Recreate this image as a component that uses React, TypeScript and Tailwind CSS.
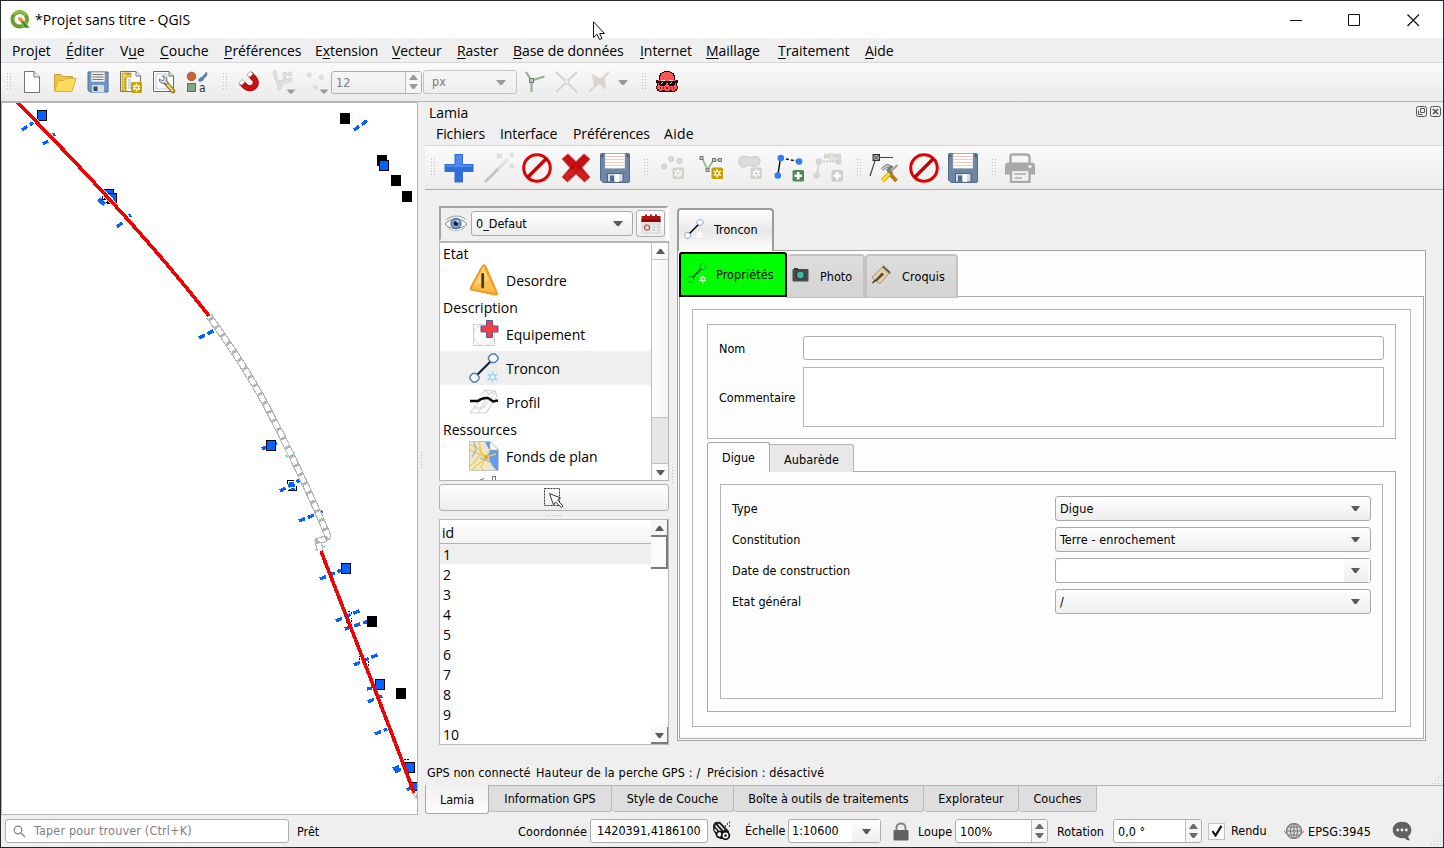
import type { ReactNode } from "react";

const SEGOE = "font-['Open_Sans','Noto_Sans',sans-serif]";
const TAHOMA = "font-['DejaVu_Sans_Condensed','DejaVu_Sans',sans-serif] [font-stretch:condensed]";

/* ---------- small building blocks ---------- */

function Grip({ className = "", rows = 6 }: { className?: string; rows?: number }) {
  return (
    <svg className={`shrink-0 ${className}`} width="5" height={rows * 3} shapeRendering="crispEdges">
      {Array.from({ length: rows }, (_, i) => (
        <g key={i} fill="#bdbdbd">
          <rect x="0" y={i * 3} width="1" height="1" />
          <rect x="3" y={i * 3} width="1" height="1" />
        </g>
      ))}
    </svg>
  );
}

function Tri({ up = false, color = "#5a5a5a", w = 9, h = 5 }: { up?: boolean; color?: string; w?: number; h?: number }) {
  return (
    <svg width={w} height={h} viewBox="0 0 10 6" preserveAspectRatio="none" className="shrink-0">
      <path d={up ? "M0 6L4 0H6L10 6Z" : "M0 0L4 6H6L10 0Z"} fill={color} />
    </svg>
  );
}

function Resize() {
  return (
    <svg width="11" height="11" shapeRendering="crispEdges" className="shrink-0" fill="#c4c4c4">
      {[[9, 0], [6, 3], [9, 3], [3, 6], [6, 6], [9, 6], [0, 9], [3, 9], [6, 9], [9, 9]].map(([x, y]) => (
        <rect key={`${x}-${y}`} x={x} y={y} width="1" height="1" />
      ))}
    </svg>
  );
}

/* ---------- icons ---------- */

function QgisLogo() {
  return (
    <svg width="20" height="20" viewBox="0 0 20 20">
      <circle cx="9.7" cy="9.3" r="7.3" fill="none" stroke="#6aa02f" strokeWidth="4" />
      <path d="M4 4.500A7.300 7.300 0 0 1 16 5.500" fill="none" stroke="#8dc04a" strokeWidth="2.500" />
      <path d="M10 11L14 10.500L20 18H14.500Z" fill="#4f8a25" stroke="#fff" strokeWidth=".5" />
      <path d="M8 7L12 7.500L13 11.500L11 12L8.500 10Z" fill="#ee7913" />
      <path d="M8 7L12 7.500L10.500 10Z" fill="#f8b24a" />
    </svg>
  );
}

function NewFile() {
  return (
    <svg width="18" height="24" viewBox="0 0 18 24">
      <path d="M1.500 1.500H11L16.500 7V22.500H1.500Z" fill="#fff" stroke="#747474" />
      <path d="M11 1.500V7H16.500" fill="#f2f2f2" stroke="#747474" />
    </svg>
  );
}

function OpenFolder() {
  return (
    <svg width="24" height="22" viewBox="0 0 24 22">
      <path d="M1.500 19V3.500H8L10 5.500H19.500V9" fill="#e9c34a" stroke="#c9a335" />
      <path d="M1.500 20.500L5 9.500H11L13 7.500H23L19 20.500Z" fill="#ffdb58" stroke="#d9b13c" />
    </svg>
  );
}

function Floppy() {
  return (
    <svg width="22" height="22" viewBox="0 0 22 22">
      <path d="M1 1H21V21H3L1 19Z" fill="#6d98c8" stroke="#4b6e98" />
      <rect x="4" y="1" width="14" height="10" fill="#f0f0f0" stroke="#7b8794" strokeWidth=".6" />
      <path d="M5.500 3.500H16.500M5.500 6H16.500M5.500 8.500H16.500" stroke="#777" />
      <rect x="5" y="14" width="12" height="7" fill="#d9dce0" />
      <rect x="6.500" y="15.500" width="4" height="4.500" fill="#2f4a78" />
    </svg>
  );
}

function Star({ x, y, s, fill }: { x: number; y: number; s: number; fill: string }) {
  const c = s / 2;
  const r = s * 0.36;
  const k = r * 0.86;
  const h = r * 0.5;
  return (
    <g transform={`translate(${x} ${y})`}>
      <rect width={s} height={s} rx="1.500" fill={fill} />
      <path
        d={`M${c} ${c - r}V${c + r}M${c - k} ${c - h}L${c + k} ${c + h}M${c - k} ${c + h}L${c + k} ${c - h}`}
        stroke="#fff"
        strokeWidth={s * 0.13}
      />
      <circle cx={c} cy={c} r={s * 0.17} fill={fill} stroke="#fff" strokeWidth="1.100" />
    </g>
  );
}

function LayoutNew() {
  return (
    <svg width="24" height="24" viewBox="0 0 24 24">
      <path d="M1.500 1.500H17L21.500 6V21.500H1.500Z" fill="#fff" stroke="#747474" />
      <path d="M17 1.500V6H21.500" fill="#eee" stroke="#747474" />
      <path d="M3 3H12V7H7V21H3Z" fill="#f2d04a" stroke="#b89314" strokeWidth=".8" />
      <path d="M5 9H7M5 12H7M5 15H7M5 18H7M8 3V5M10 3V5" stroke="#7c6410" strokeWidth=".8" />
      <path d="M9 9V19H12V9Z" fill="#cfd9e8" />
      <Star x={12} y={12} s={11} fill="#c9a000" />
    </svg>
  );
}

function LayoutManager() {
  return (
    <svg width="24" height="24" viewBox="0 0 24 24">
      <path d="M1.500 1.500H17L21.500 6V21.500H1.500Z" fill="#fff" stroke="#666" />
      <path d="M17 1.500V6H21.500" fill="#eee" stroke="#666" />
      <path d="M4 4H15V19H4Z" fill="#fbfcff" stroke="#a9bbe0" strokeWidth=".8" />
      <path d="M14 13L21 21" stroke="#8c7320" strokeWidth="4.500" strokeLinecap="round" />
      <path d="M15 14L20.500 20.500" stroke="#f0cf60" strokeWidth="2.500" strokeLinecap="round" />
      <path d="M7.500 9C7 12 10 14.500 12.500 13L14.500 14.500L16 12.500L14.500 11C15.500 7.500 12.500 5.500 10.500 6L12.500 8.500L10.500 11Z" fill="#dadada" stroke="#555" strokeWidth=".8" />
    </svg>
  );
}

function StyleManager() {
  return (
    <svg width="22" height="22" viewBox="0 0 22 22">
      <circle cx="5.500" cy="5.500" r="4.300" fill="#cc6438" stroke="#9e4a26" strokeWidth=".8" />
      <path d="M13 10C12 8 15 6 16 6.500L20.500 1L21 4L17.500 8C17 10 15 10.500 13 10Z" fill="#5a83ad" stroke="#3f6288" strokeWidth=".6" />
      <rect x="1.500" y="12.500" width="8" height="8" fill="#82a783" stroke="#4a7a4f" />
      <text x="13" y="20.500" fontSize="12" fill="#333" fontFamily="DejaVu Sans">a</text>
    </svg>
  );
}

function Magnet() {
  return (
    <svg width="22" height="22" viewBox="0 0 22 22">
      <path d="M3.500 11.500C8 16.500 10 18 13.500 17C18.500 15.500 18.500 10.500 16.500 8L11.500 2.500" fill="none" stroke="#8f0000" strokeWidth="6" />
      <path d="M3.500 11.500C8 16.500 10 18 13.500 17C18.500 15.500 18.500 10.500 16.500 8L11.500 2.500" fill="none" stroke="#cf0d0d" strokeWidth="4.800" />
      <path d="M.8 11.600L4.500 8.200L7 10.900L3.300 14.300ZM8.800 3.600L12.500.3L15 3L11.300 6.300Z" fill="#fff" stroke="#999" strokeWidth=".7" />
    </svg>
  );
}

function SnapV() {
  return (
    <svg width="24" height="24" viewBox="0 0 24 24">
      <path d="M2 3L7 18L13 6M7 18L19 10M13 4H20M12 9.500H19" stroke="#dcdcdc" strokeWidth="1.500" fill="none" />
      {[[2.500, 2.500], [3.500, 7], [6, 12], [7, 18], [9, 12], [12.500, 9.500], [12.500, 4], [18, 3.500], [18, 9.500]].map(([x, y]) => (
        <rect key={`${x}${y}`} x={x - 1.500} y={y - 1.500} width="3.500" height="3.500" rx="1" fill="#e3e3e3" stroke="#cfcfcf" strokeWidth=".9" />
      ))}
      <path d="M14.500 19.500H23.500L20 23.500H18Z" fill="#9b9b9b" />
    </svg>
  );
}

function SnapDots() {
  return (
    <svg width="24" height="24" viewBox="0 0 24 24">
      {[[3, 4.500], [15, 7], [9, 17.500]].map(([x, y]) => (
        <rect key={x} x={x - 1.500} y={y - 1.500} width="3.500" height="3.500" rx="1" fill="#e3e3e3" stroke="#cfcfcf" strokeWidth=".9" />
      ))}
      <path d="M13.500 19.500H22.500L19 23.500H17Z" fill="#9b9b9b" />
    </svg>
  );
}

function TopoEdit() {
  return (
    <svg width="22" height="22" viewBox="0 0 22 22" fill="none">
      <path d="M2 1L7.500 9.500L20.500 5.500M7.500 10V21" stroke="#86bd86" strokeWidth="2.200" />
      <rect x="5.500" y="7.500" width="4" height="4" fill="#c4c4c4" stroke="#777" />
    </svg>
  );
}

function SnapCross() {
  return (
    <svg width="24" height="22" viewBox="0 0 24 22" fill="none" stroke="#d3d3d3">
      <path d="M1 1L22 21M22 1L1 21" strokeWidth="2" />
      <rect x="9.500" y="9" width="4" height="4" fill="#eee" />
    </svg>
  );
}

function SelfSnap() {
  return (
    <svg width="24" height="22" viewBox="0 0 24 22" fill="none">
      <path d="M1 21L21 1" stroke="#d6d6d6" strokeWidth="2" />
      <path d="M4 3L12 7.500L17 5L18 19L11 13L6 15Z" fill="#d9d5ca" />
    </svg>
  );
}

function Octopus() {
  return (
    <svg width="22" height="22" viewBox="0 0 22 22" shapeRendering="crispEdges">
      <path d="M8 0H14V1H16V2H18V4H19V9H22V12H21V15H22V18H21V20H19V21H3V20H1V18H0V15H1V12H0V9H3V4H4V2H6V1H8Z" fill="#2a0d0d" />
      <path d="M8 1H14V2H16V3H17V5H18V9H20V15H21V18H19V20H16V19H13V20H9V19H6V20H3V18H1V15H2V9H4V5H5V3H6V2H8Z" fill="#fa5553" />
      <path d="M5 9H9V10H13V9H17V10H5Z" fill="#ffe3e3" />
      <path d="M0 10H22V12H19V14H18V15H13V14H12V12H10V14H9V15H4V14H3V12H0Z" fill="#101010" />
      <path d="M4 16H5V18H4ZM7 16H8V18H7ZM10 16H12V18H10ZM14 16H15V18H14ZM17 16H18V18H17Z" fill="#8c1a1a" />
      <path d="M5 12H6V13H5ZM6 11H7V12H6ZM14 12H15V13H14ZM15 11H16V12H15Z" fill="#ddd" />
    </svg>
  );
}

function PlusBlue() {
  return (
    <svg width="30" height="30" viewBox="0 0 30 30">
      <path d="M10.500 1H19V11H29.500V19H19V29.500H10.500V19H.5V11H10.500Z" fill="#2f6fdc" />
      <path d="M11.500 2H18V12H28V14H2V12H11.500Z" fill="#4f8aea" />
    </svg>
  );
}

function Wand() {
  return (
    <svg width="32" height="32" viewBox="0 0 32 32" fill="none">
      <path d="M2 30L20 12" stroke="#c4c4c4" strokeWidth="3" />
      <path d="M15 17L25 7" stroke="#e0e0e0" strokeWidth="3" />
      <path d="M14 1.500L19 6.500M19 1.500L14 6.500M27 1L30.500 4.500M30.500 1L27 4.500M26.500 12L30.500 16M30.500 12L26.500 16" stroke="#dddbd3" strokeWidth="2" />
    </svg>
  );
}

function Forbid() {
  return (
    <svg width="30" height="30" viewBox="0 0 30 30" fill="none">
      <circle cx="15" cy="15" r="13.300" stroke="#da0606" strokeWidth="3" />
      <path d="M5.500 24.500L24.500 5.500" stroke="#c00404" strokeWidth="3.400" />
    </svg>
  );
}

function RedX() {
  return (
    <svg width="30" height="30" viewBox="0 0 30 30">
      <path d="M1 6L7 .8L15 8.500L23 .8L29 6L21 14.800L29 24L23.500 29L15 21L6.500 29L1 24L9 14.800Z" fill="#c51313" stroke="#ce5252" strokeWidth=".8" />
      <path d="M9 14.800L15 12L21 14.800L15 20Z" fill="#a30505" />
      <path d="M2.500 23L15 12L27 24L23.500 27.500L15 19.500L6.500 27.500Z" fill="#de2a2a" opacity=".5" />
    </svg>
  );
}

function BigFloppy() {
  return (
    <svg width="30" height="30" viewBox="0 0 30 30">
      <path d="M.5 1.500Q.5 .5 1.500 .5H28.500Q29.500 .5 29.500 1.500V28.500Q29.500 29.500 28.500 29.500H3L.5 27Z" fill="#6c87a6" stroke="#526b88" />
      <rect x="5" y=".5" width="20" height="15" fill="#fff" stroke="#a7a9ab" strokeWidth=".6" />
      <path d="M5.500 3.500H24.500M5.500 6.500H24.500M5.500 9.500H24.500M5.500 12.500H24.500" stroke="#f1c9bb" />
      <path d="M7.500 29V20.500H23V29Z" fill="#d5dbe3" stroke="#4c637d" />
      <path d="M15 21H19V29H15Z" fill="#fff" />
      <rect x="10" y="22.500" width="4" height="6" fill="#4f6b8a" />
      <path d="M1.500 3H3M27 3H28.500" stroke="#24384f" strokeWidth="1.500" />
    </svg>
  );
}

function PointsNew() {
  return (
    <svg width="26" height="26" viewBox="0 0 26 26">
      <g fill="#dcdcdc" stroke="#c9c9c9">
        <circle cx="12" cy="4" r="2.500" />
        <circle cx="20.500" cy="6" r="2.500" />
        <circle cx="5" cy="11.500" r="2.500" />
      </g>
      <Star x={13.500} y={12.500} s={11.500} fill="#d3d1c9" />
    </svg>
  );
}

function LineNew() {
  return (
    <svg width="26" height="26" viewBox="0 0 26 26">
      <path d="M4 3L9.500 14.500L15.500 5H22" fill="none" stroke="#7fbf84" strokeWidth="1.600" />
      <g fill="#c9c9c9" stroke="#777">
        <rect x="2" y="1.500" width="3" height="3" />
        <rect x="8" y="13.500" width="3" height="3" />
        <rect x="14.500" y="3.500" width="3" height="3" />
        <rect x="20.500" y="3.500" width="3" height="3" />
      </g>
      <Star x={13.500} y={12.500} s={11.500} fill="#c9a000" />
    </svg>
  );
}

function PolyNew() {
  return (
    <svg width="26" height="26" viewBox="0 0 26 26">
      <path d="M2 6C2 0 7 1 11 2C15 3 22 -1 23 5C23.500 9 21 12 16 11C12 10 11 10 8 12C4 13 2 10 2 6Z" fill="#dcdcdc" stroke="#c9c9c9" />
      <Star x={13.500} y={12.500} s={11.500} fill="#d3d1c9" />
    </svg>
  );
}

function PlusBadge({ fill }: { fill: string }) {
  return (
    <g>
      <rect x="18.500" y="17" width="11.500" height="11.500" rx="1.500" fill={fill} />
      <path d="M24.200 19V26.500M20.500 22.700H28" stroke="#fff" strokeWidth="2.600" />
    </g>
  );
}

function LineAdd() {
  return (
    <svg width="31" height="30" viewBox="0 0 31 30">
      <path d="M3.800 22.500L6.500 5" stroke="#111" strokeWidth="1.500" />
      <path d="M7 5L25 8.500" stroke="#111" strokeWidth="1.500" strokeDasharray="3 2" />
      <g fill="#2a80f5">
        <circle cx="3.800" cy="22.500" r="3.300" />
        <circle cx="6.800" cy="5" r="3.300" />
        <circle cx="25" cy="8.500" r="3.300" />
      </g>
      <PlusBadge fill="#4f8b50" />
    </svg>
  );
}

function LineAddDisabled() {
  return (
    <svg width="31" height="30" viewBox="0 0 31 30">
      <path d="M3.800 22.500L6 8" stroke="#d0d0d0" strokeWidth="1.500" />
      <path d="M7 8.500H25.500" stroke="#c4c4c4" strokeWidth="1.500" strokeDasharray="2 1" />
      <g fill="#d0d5dd">
        <circle cx="3.800" cy="22.500" r="3.300" />
        <circle cx="6" cy="8.500" r="3.300" />
        <circle cx="25.500" cy="8.500" r="3.300" />
      </g>
      <path d="M11 .8H28V5.500H11Z" fill="#dad6cc" />
      <path d="M17 -1H21V8H17Z" fill="#e4e4e4" stroke="#ccc" strokeWidth=".6" />
      <PlusBadge fill="#cecece" />
    </svg>
  );
}

function EditTools() {
  return (
    <svg width="30" height="30" viewBox="0 0 30 30" fill="none">
      <path d="M1 23L7 4.500H24" stroke="#444" strokeWidth="1.200" />
      <rect x="4" y="1.500" width="6.500" height="6" fill="#aaa" stroke="#333" />
      <path d="M4 1.500L10.500 7.500M10.500 1.500L4 7.500" stroke="#333" strokeWidth=".8" />
      <path d="M28.500 12L20 20" stroke="#999" strokeWidth="1.800" />
      <path d="M21 21L27.500 28" stroke="#b87a10" strokeWidth="4" />
      <path d="M13.500 28L22.500 18" stroke="#d8a900" strokeWidth="4.500" />
      <path d="M13.500 28L21.500 19" stroke="#ffe23c" strokeWidth="2.500" />
      <path d="M13 16.500L18 12.500L22 14L19 17L23 21" stroke="#777" strokeWidth="3" />
      <path d="M13 16.500L18 12.500L20.500 13.500" stroke="#ddd" strokeWidth="1.300" />
    </svg>
  );
}

function Printer() {
  return (
    <svg width="30" height="30" viewBox="0 0 30 30">
      <path d="M5.500 12V3Q5.500 1.500 7 1.500H21Q24.500 1.500 24.500 4.500V12" fill="#f6f6f6" stroke="#a9a9a9" strokeWidth="2.400" />
      <path d="M0 13Q0 9.500 3 9.500H27Q30 9.500 30 13V21.500H0Z" fill="#a9a9a9" />
      <circle cx="25" cy="13.500" r="1.600" fill="#f3f3f3" />
      <rect x="6" y="17" width="18.500" height="12" fill="#f1f1f1" stroke="#a9a9a9" strokeWidth="2.400" />
      <path d="M9.500 21H21M9.500 25H17" stroke="#a9a9a9" strokeWidth="1.700" />
    </svg>
  );
}

function Eye() {
  return (
    <svg width="24" height="17" viewBox="0 0 24 17">
      <path d="M1 9C6 3 17 2 23 9C17 15 6 15 1 9Z" fill="#fff" stroke="#666" strokeWidth=".8" />
      <path d="M2 5C8 -.5 17 0 22 4.500" fill="none" stroke="#8a8a8a" strokeWidth=".8" />
      <path d="M3 12C8 17 16 17 21 12" fill="none" stroke="#aaa" strokeWidth=".7" />
      <circle cx="12" cy="8.500" r="5.200" fill="#6f9fd8" stroke="#35547c" strokeWidth=".8" />
      <circle cx="12" cy="8.500" r="2.300" fill="#122" />
      <circle cx="13.500" cy="6.500" r="1" fill="#fff" />
    </svg>
  );
}

function CalendarRed() {
  return (
    <svg width="20" height="20" viewBox="0 0 20 20">
      <rect x="1" y="7" width="18" height="12" fill="#f2f2f2" stroke="#c5c5c5" strokeWidth=".6" />
      <path d="M1 10H19M1 13H19M1 16H19M5 7V19M9 7V19M13 7V19M17 7V19" stroke="#bccac6" strokeWidth=".7" />
      <path d="M.5 2H4V.5H6V2H9V.5H11V2H14V.5H16V2H19.500V8H.5Z" fill="#b01010" />
      <path d="M.5 5.500H19.500V8H.5Z" fill="#8d0808" />
      <circle cx="6" cy="13.500" r="2.500" fill="none" stroke="#d24545" strokeWidth="1.200" />
    </svg>
  );
}

function Warning() {
  return (
    <svg width="30" height="32" viewBox="0 0 30 32">
      <path d="M14.500 .8Q16 .3 17 2.500L28.500 29Q28.500 31.500 27 31.200L2 26Q.5 25 1.500 23L13 2Q13.700 1 14.500 .8Z" fill="#f6a623" stroke="#dd8715" strokeWidth=".8" />
      <path d="M14.500 2.500L26.500 28.500L3 24.500Z" fill="#fcbf4c" />
      <path d="M14.500 3L20 16Q12 20 5 21Z" fill="#ffdc94" opacity=".7" />
      <path d="M13.700 10.500V23" stroke="#4c3b1c" strokeWidth="2.800" strokeLinecap="round" />
    </svg>
  );
}

function Equip() {
  return (
    <svg width="30" height="30" viewBox="0 0 30 30">
      <rect x="4.500" y="5.500" width="21" height="21" fill="#fff" stroke="#cfcfcf" />
      <circle cx="15" cy="16" r="10.500" fill="none" stroke="#d9d9d9" />
      <path d="M17.500 1.500H23.500V7H29V13H23.500V18.500H17.500V13H12V7H17.500Z" fill="#f93c3c" stroke="#54589c" />
    </svg>
  );
}

function Segment({ size = 30, star = "#a8d3f5", line = "#0d2238", node = "#4a7fb5", fill = "#fff" }: { size?: number; star?: string; line?: string; node?: string; fill?: string }) {
  return (
    <svg width={size} height={size} viewBox="0 0 30 30" fill="none">
      <path d="M8 22L22 8" stroke={line} strokeWidth="2.200" />
      <path d="M3.500 20.500H7L10 23.500V26L7 29H4L1 26V23.500Z" fill={fill} stroke={node} strokeWidth="1.400" />
      <path d="M22.500 1H26L29 4V6.500L26 9.500H22.500L19.500 6.500V4Z" fill={fill} stroke={node} strokeWidth="1.400" />
      <path d="M23.500 18.500V29.500M18.500 21L28.500 27M28.500 21L18.500 27" stroke={star} strokeWidth="1.800" />
      <circle cx="23.500" cy="24" r="2.600" fill={fill} stroke={star} strokeWidth="1.500" />
    </svg>
  );
}

function Profile() {
  return (
    <svg width="30" height="26" viewBox="0 0 30 26" fill="none">
      <path d="M1 24H17L28 7L26 2L16 1L12 6M1 24L11 11M9 24L20 5L26 2M17 24L22 17M5 19H14L26 4M20 5L16 1" stroke="#d2d2d2" strokeWidth="1.100" />
      <path d="M1 12H9C12 9 18 8.500 20 9.500L24 12.500L29 11.500" stroke="#0a0a0a" strokeWidth="2.500" />
    </svg>
  );
}

function MapSheet() {
  return (
    <svg width="30" height="30" viewBox="0 0 30 30">
      <path d="M.5 .5H21L29.500 9V29.500H.5Z" fill="#ece6cf" stroke="#b9b9b9" strokeWidth=".8" />
      <path d="M16 1H21L29 9V29H27L22 23L19 14L21 10Z" fill="#5c9cf2" />
      <path d="M1 21L8 18L14 22L19 29H1Z" fill="#e6ecc6" />
      <path d="M10 1L13 10L16 16H12Z" fill="#c7dfa2" />
      <path d="M1 9L10 13L17 16L27 13M10 1L12 12L5 22L1 25M17 16L12 26L14 29M1 4L8 6L17 16L22 7M3 29L17 16L23 24" fill="none" stroke="#f7ca55" strokeWidth="1.400" />
      <path d="M5 1L7 9L3 16M11 17L22 21" fill="none" stroke="#7fb3e8" strokeWidth="1.200" />
      <circle cx="17" cy="16" r="2" fill="#f19a2a" />
      <path d="M21 .5V9H29.500Z" fill="#fff" stroke="#b3b3b3" strokeWidth=".7" />
    </svg>
  );
}

function SelectArrow() {
  return (
    <svg width="22" height="22" viewBox="0 0 22 22" fill="none">
      <path d="M1.500 1.500H16.500V18.500H1.500Z" stroke="#333" strokeDasharray="2 1" />
      <path d="M6.500 6.500L17.500 11L14.500 13L20 19L18.500 20.500L12.500 15L10.500 18Z" fill="#fff" stroke="#333" />
    </svg>
  );
}

function Camera() {
  return (
    <svg width="17" height="14" viewBox="0 0 17 14">
      <rect x=".5" y="1" width="16" height="12.500" rx="1" fill="#4b4b4b" />
      <rect x="2" y="0" width="4" height="2" fill="#3a3a3a" />
      <circle cx="8.500" cy="7" r="4.700" fill="#1d3b3b" />
      <circle cx="8.500" cy="7" r="3.400" fill="#3fb5a4" />
    </svg>
  );
}

function Sketch() {
  return (
    <svg width="20" height="20" viewBox="0 0 20 20">
      <path d="M1 12L12 1.500L19 7.500L9 18.500Q4 17 1 12Z" fill="#e2cfa8" stroke="#8d7b5a" strokeWidth=".7" />
      <path d="M12 1.500L19 8" stroke="#55483a" strokeWidth="2.400" strokeDasharray="1.500 .7" />
      <path d="M3.500 15.500L11 7.500L13 9.500L5.500 16.500Z" fill="#50483c" />
      <path d="M1.500 18L4.500 15" stroke="#222" strokeWidth="1.300" />
    </svg>
  );
}

function Binoculars() {
  return (
    <svg width="20" height="20" viewBox="0 0 20 20">
      <path d="M1 4L3 1L8 .8L17 10L15 18L8 18L4 14L1 9Z" fill="#222" />
      <path d="M3.500 4.500L9 11M6.500 3L12 9M2.500 8L5 11" stroke="#fff" strokeWidth="1.200" />
      <circle cx="7.500" cy="13.500" r="3" fill="#fff" stroke="#111" strokeWidth="1.700" />
      <circle cx="13.500" cy="14.500" r="3.800" fill="#fff" stroke="#111" strokeWidth="1.800" />
      <circle cx="13.500" cy="14.500" r="1.300" fill="#111" />
      <path d="M13 5H14M15 3H16M17 1.500H18M17 5H18" stroke="#111" strokeWidth="1.300" />
    </svg>
  );
}

function Lock() {
  return (
    <svg width="16" height="19" viewBox="0 0 16 19">
      <path d="M3.500 9V5.500Q4 1.500 8 1.500T12.500 5.500V9" fill="none" stroke="#858585" strokeWidth="2" />
      <rect x=".5" y="8" width="15" height="10.500" rx="1" fill="#626262" />
    </svg>
  );
}

function Globe() {
  return (
    <svg width="20" height="18" viewBox="0 0 20 18" fill="none">
      <path d="M1 10.500Q10 15 19 10.500M1 8.500Q0 9.500 1 10.500M19 8.500Q20 9.500 19 10.500" stroke="#777" />
      <circle cx="10" cy="9" r="7.500" fill="#dcdcdc" stroke="#6f6f6f" strokeWidth="1.200" />
      <ellipse cx="10" cy="9" rx="3.500" ry="7.500" stroke="#777" />
      <path d="M10 1.500V16.500M2.500 9H17.500M4 5H16M4 13H16" stroke="#777" />
    </svg>
  );
}

function Speech() {
  return (
    <svg width="20" height="20" viewBox="0 0 20 20" className="shrink-0">
      <path d="M10 .8C15.500 .8 19.300 4 19.300 9C19.300 12 18 14 16 15.500L18 19.500C15 19.500 13.500 18 12.500 17C6 18 .8 14.500 .8 9C.8 4 4.500 .8 10 .8Z" fill="#616161" />
      <g fill="#eee">
        <circle cx="5.700" cy="9" r="1.400" />
        <circle cx="10" cy="9" r="1.400" />
        <circle cx="14.300" cy="9" r="1.400" />
      </g>
    </svg>
  );
}

/* ---------- map ---------- */

const RED_NORTH = "M16 101C80 166 150 240 209 316";
const RED_SOUTH = "M321 551C340 601 380 700 414 793";
const TRACK = "M209 316C235 352 252 378 268 409C288 447 309 491 328 536Q327 539 318 541L320 550";
const BLUE = "#0562ff";
const SQUARES: [number, number, string][] = [
  [345, 118, "#000"], [382, 160, "#000"], [396, 180, "#000"], [407, 196, "#000"], [372, 621, "#000"], [401, 693, "#000"],
  [42, 115, BLUE], [384, 165, BLUE], [271, 445, BLUE], [346, 568, BLUE], [380, 684, BLUE],
  [410, 767, BLUE], [109, 194, BLUE], [112, 198, BLUE],
];
const SPURS: [number, number, number, number][] = [
  [22, 130, 34, 122], [43, 144, 48, 141], [53, 135, 55, 134], [354, 130, 368, 120], [117, 227, 123, 222], [129, 216, 131, 215],
  [199, 338, 215, 330], [262, 449, 278, 442], [280, 491, 300, 480], [299, 521, 324, 511], [320, 579, 344, 569],
  [336, 621, 361, 610], [345, 629, 369, 621], [354, 665, 379, 654], [367, 689, 372, 688], [368, 702, 382, 696],
  [375, 734, 387, 729], [393, 769, 401, 766], [395, 772, 402, 769], [407, 790, 413, 786],
];

function MapCanvas() {
  return (
    <svg className="block" width="415" height="711" viewBox="2 103 415 711" shapeRendering="crispEdges">
      <rect x="2" y="103" width="415" height="711" fill="#fff" />
      {SPURS.map(([a, b, c, d]) => (
        <path key={`${a}-${b}`} d={`M${a} ${b}L${c} ${d}`} stroke={BLUE} strokeWidth="3.400" strokeDasharray="6.500 3" />
      ))}
      {SQUARES.map(([x, y, c]) => (
        <rect key={`${x}-${y}`} x={x - 4.500} y={y - 4.500} width="9" height="9.500" fill={c} stroke="#000" />
      ))}
      <path d="M285 455H287M291 452H295M286 456H289M315 549H318M322 546H325" stroke="#3fdada" />
      <path d="M287.500 484V480.500H293.500M296.500 486V490.500H288" stroke="#000" fill="none" />
      <path d="M289 482H292V484H295V487H290V485H289ZM291 488H295V490H289V489H291Z" fill={BLUE} />
      <path d="M348 611.500H351V615M346 622.500H351V618M359.500 660V656.500H361M368.500 661V665.500H364M404 759.500H409" stroke="#000" fill="none" strokeDasharray="2 1" />
      <path d="M97 200L100 197L103 200L106 203L103 206L99 203Z" fill={BLUE} stroke="#fff" strokeWidth=".5" />
      <path d="M102.500 196V199.500H106M106 202.500H109" stroke="#000" fill="none" />
      <path d="M411.500 782.500H418V790H413Z" fill={BLUE} stroke="#000" />
      <path d={RED_NORTH} fill="none" stroke="#fff" strokeWidth="5.500" />
      <path d={RED_NORTH} fill="none" stroke="#f50000" strokeWidth="3.600" />
      <path d={RED_SOUTH} fill="none" stroke="#f50000" strokeWidth="3.600" />
      <path d={TRACK} fill="none" stroke="#b4b4b4" strokeWidth="7" strokeLinejoin="round" />
      <path d={TRACK} fill="none" stroke="#fff" strokeWidth="4.600" strokeLinejoin="round" />
      <path d={TRACK} fill="none" stroke="#b4b4b4" strokeWidth="4.600" strokeDasharray="2.800 7.200" strokeDashoffset="-2" />
      <path d="M412 793L416 797L414 799M416 794V799" stroke="#b4b4b4" fill="none" />
    </svg>
  );
}

/* ---------- widgets ---------- */

function Spin({ text, className, boxClass, arrow = "#6b6b6b" }: { text: string; className: string; boxClass: string; arrow?: string }) {
  return (
    <div className={`flex overflow-hidden rounded-[3px] border border-[#adadad] ${className}`}>
      <div className={`flex-1 pl-1 ${boxClass}`}>{text}</div>
      <div className="flex w-4 flex-col items-center justify-center gap-[4px] border-l border-[#bdbdbd] bg-[#f6f6f6]">
        <Tri up color={arrow} w={9} />
        <Tri color={arrow} w={9} />
      </div>
    </div>
  );
}

function Combo({ text = "", editable = false }: { text?: string; editable?: boolean }) {
  return (
    <div className={`flex h-[25px] w-[316px] items-center justify-between rounded-[3px] border border-[#a9a9a9] pl-1 ${editable ? "bg-white" : "bg-linear-to-b from-[#fefefe] to-[#eeeeee]"}`}>
      <span className="leading-[23px] tracking-[0.1px]">{text}</span>
      <span className={`flex h-full w-[26px] items-center justify-center pb-px pr-[3px] ${editable ? "border-r-2 border-white bg-linear-to-b from-[#fdfdfd] to-[#eeeeee] pr-px" : ""}`}>
        <Tri w={9} h={5} />
      </span>
    </div>
  );
}

const MENUS: [string, string, string, string][] = [
  ["Pro", "j", "et", "w-[54px]"], ["", "É", "diter", "w-[54px]"], ["V", "u", "e", "w-[40px]"], ["", "C", "ouche", "w-[64px]"],
  ["", "P", "références", "w-[91px]"], ["E", "x", "tension", "w-[77px]"], ["", "V", "ecteur", "w-[65px]"], ["", "R", "aster", "w-[56px]"],
  ["", "B", "ase de données", "w-[127px]"], ["", "I", "nternet", "w-[66px]"], ["", "M", "aillage", "w-[72px]"],
  ["", "T", "raitement", "w-[87px]"], ["", "A", "ide", "w-[50px]"],
];

function TreeHead({ children }: { children: ReactNode }) {
  return <div className="h-5 pl-[3px] leading-[21px]">{children}</div>;
}

function TreeItem({ icon, children, selected = false }: { icon: ReactNode; children: ReactNode; selected?: boolean }) {
  return (
    <div className={`flex h-[34px] items-center pl-[29px] ${selected ? "bg-[#efefef]" : ""}`}>
      <span className="flex w-[37px] shrink-0 items-center">{icon}</span>
      <span className="pt-px whitespace-nowrap">{children}</span>
    </div>
  );
}

function LeftColumn() {
  return (
    <div className="flex w-[230px] shrink-0 flex-col pt-[16px]">
      <div className={`flex h-[35px] items-start border-2 border-r-[3px] border-[#a3a3a3] border-r-white border-b-transparent pl-[3px] pt-[3px] ${TAHOMA} text-[12.500px]`}>
        <span className="mr-[3px] w-[24px] shrink-0 pt-1"><Eye /></span>
        <div className="flex h-[25px] w-[162px] shrink-0 items-center justify-between rounded-[3px] border border-[#a9a9a9] bg-linear-to-b from-[#fefefe] to-[#eee] pl-1 pr-[9px]">
          <span className="leading-[23px]">0_Defaut</span>
          <Tri w={10} h={5} />
        </div>
        <div className="-mt-px ml-[3px] flex h-[27px] w-[29px] shrink-0 items-center justify-center rounded-[3px] border border-[#b0b0b0] bg-linear-to-b from-white to-[#eee]">
          <CalendarRed />
        </div>
      </div>

      <div className={`flex h-[240px] border border-t-2 border-[#b4b4b4] bg-white ${SEGOE} text-[14px]`}>
        <div className="flex-1 overflow-hidden">
          <TreeHead>Etat</TreeHead>
          <TreeItem icon={<Warning />}>Desordre</TreeItem>
          <TreeHead>Description</TreeHead>
          <TreeItem icon={<Equip />}>Equipement</TreeItem>
          <TreeItem icon={<Segment />} selected>Troncon</TreeItem>
          <TreeItem icon={<Profile />}>Profil</TreeItem>
          <TreeHead>Ressources</TreeHead>
          <TreeItem icon={<MapSheet />}>Fonds de plan</TreeItem>
          <div className="pt-[3px] pl-[38px]">
            <svg width="20" height="4" fill="none" stroke="#777"><path d="M2 4L6 2.500M14.500 0V4M17.500 0V4M14.500 .5H17.500" /></svg>
          </div>
        </div>
        <div className="flex w-[17px] flex-col border-l border-[#c0c0c0] bg-[#e6e6e6]">
          <div className="flex h-[17px] items-center justify-center border-b border-[#c0c0c0] bg-[#fbfbfb]"><Tri up w={9} /></div>
          <div className="h-[158px] border-b border-[#c0c0c0] bg-linear-to-r from-white to-[#f4f4f4]" />
          <div className="flex-1" />
          <div className="flex h-[17px] items-center justify-center border-t border-[#c0c0c0] bg-[#fbfbfb]"><Tri w={9} /></div>
        </div>
      </div>

      <div className="mt-[3px] flex h-[27px] items-center justify-center rounded-[3px] border border-[#b0b0b0] bg-linear-to-b from-[#fefefe] to-[#ededed]">
        <SelectArrow />
      </div>
      <div className="flex h-[8px] items-center justify-center">
        <svg width="17" height="1" fill="#b8b8b8">{[0, 3, 6, 9, 12, 15].map((x) => <rect key={x} x={x} width="1" height="1" />)}</svg>
      </div>

      <div className={`flex h-[226px] border border-[#b8b8b8] bg-white ${SEGOE} text-[14px]`}>
        <div className="flex-1">
          <div className="h-6 border-b border-[#b4b4b4] bg-linear-to-b from-white to-[#f2f2f2] pl-[2px] leading-[25px]">id</div>
          {[1, 2, 3, 4, 5, 6, 7, 8, 9, 10].map((n) => (
            <div key={n} className={`h-5 pl-[3px] leading-[21px] ${n === 1 ? "bg-[#efefef]" : ""}`}>{n}</div>
          ))}
        </div>
        <div className="flex w-[17px] flex-col justify-between">
          <div>
            <div className="flex h-[17px] items-center justify-center border-r border-b-2 border-[#7a7a7a] bg-[#f6f6f6] pt-[2px]"><Tri up w={9} /></div>
            <div className="h-8 border-r-2 border-b-2 border-[#7a7a7a] bg-[#fbfbfb]" />
          </div>
          <div className="flex h-[17px] items-center justify-center border-r border-b-2 border-[#7a7a7a] bg-[#f9f9f9] pt-px"><Tri w={9} /></div>
        </div>
      </div>
    </div>
  );
}

function FormArea() {
  return (
    <div className={`flex w-[750px] shrink-0 flex-col pt-[18px] ${TAHOMA} text-[12.500px]`}>
      <div className="z-10 flex h-[43px] w-[97px] items-center rounded-t-[4px] border-2 border-b-0 border-[#9c9c9c] bg-linear-to-b from-white via-[#e8e8e8] to-[#fdfdfd] pl-[5px]">
        <span className="-mt-[4px]"><Segment size={20} line="#000" star="#fff" node="#7c9ccb" /></span>
        <span className="ml-[10px]">Troncon</span>
      </div>
      <div className="-mt-px h-[491px] w-[749px] border border-[#a3a3a3] bg-[#fdfdfd] px-px pb-px">
        <div className="flex h-[46px] items-start pt-px">
          <div className="z-10 flex h-[45px] w-[108px] items-center rounded-t-[3px] border-2 border-black bg-[#00ff00] pl-[6px]">
            <span className="-mt-[3px]"><Segment size={20} line="#031" star="#fff" node="#0a8f4a" fill="#0f0" /></span>
            <span className="ml-[9px] pt-px tracking-[0.1px]">Propriétés</span>
          </div>
          <div className="mt-[2px] flex h-[44px] w-[78px] items-center rounded-t-[4px] border-t-2 border-r-2 border-b border-[#c2c2c2] bg-linear-to-b from-[#dedede] to-[#d3d3d3] pl-[5px]">
            <span className="-mt-[4px]"><Camera /></span>
            <span className="ml-[11px] pt-px">Photo</span>
          </div>
          <div className="mt-[2px] flex h-[44px] w-[93px] items-center rounded-t-[4px] border-2 border-b border-[#c2c2c2] bg-linear-to-b from-[#dedede] to-[#d3d3d3] pl-[4px]">
            <span className="-mt-[4px]"><Sketch /></span>
            <span className="ml-[11px] pt-px tracking-[0.1px]">Croquis</span>
          </div>
        </div>
        <div className="-mt-px h-[443px] w-[745px] border border-[#a9a9a9] px-[12px] pt-[12px]">
          <div className="h-[418px] border border-[#b4b4b4] px-[14px] pt-[14px]">
            <div className="flex h-[115px] flex-col gap-[7px] border border-[#b4b4b4] pt-[11px] pl-[11px]">
              <div className="flex items-center">
                <span className="w-[84px] pt-[2px]">Nom</span>
                <div className="h-[24px] w-[581px] rounded-[3px] border border-[#adadad] bg-white" />
              </div>
              <div className="flex items-center">
                <span className="w-[84px] pt-[2px]">Commentaire</span>
                <div className="h-[60px] w-[581px] border border-[#b4b4b4] bg-white" />
              </div>
            </div>
            <div className="mt-[3px] flex h-[30px] items-end">
              <div className="z-10 flex h-[30px] w-[63px] items-center justify-center rounded-t-[3px] border border-b-0 border-[#a9a9a9] bg-[#fdfdfd] pt-[2px]">Digue</div>
              <div className="flex h-[28px] w-[84px] items-center justify-center rounded-tr-[3px] border border-b-0 border-l-0 border-[#b4b4b4] bg-[#e8e8e8] pt-[3px] tracking-[0.1px]">Aubarède</div>
            </div>
            <div className="-mt-px h-[241px] border border-[#a9a9a9] px-[12px] pt-[12px]">
              <div className="flex h-[215px] flex-col gap-[6px] border border-[#b4b4b4] pt-[11px] pl-[11px]">
                {["Type", "Constitution", "Date de construction", "Etat général"].map((label, i) => (
                  <div key={label} className="flex items-center">
                    <span className="w-[323px] pt-px">{label}</span>
                    <Combo text={["Digue", "Terre - enrochement", "", "/"][i]} editable={i === 2} />
                  </div>
                ))}
              </div>
            </div>
          </div>
        </div>
      </div>
    </div>
  );
}

const DOCK_TABS: [string, string][] = [
  ["Information GPS", "w-[123px]"], ["Style de Couche", "w-[122px]"], ["Boîte à outils de traitements", "w-[190px]"],
  ["Explorateur", "w-[95px]"], ["Couches", "w-[78px]"],
];

function LamiaDock() {
  return (
    <div className="flex w-[1018px] shrink-0 flex-col">
      <div className={`flex h-[19px] items-center justify-between pl-1 pr-px ${SEGOE} text-[14px]`}>
        <span className="pt-[1px]">Lamia</span>
        <svg width="26" height="11" fill="none" stroke="#555">
          <rect x=".5" y=".5" width="10" height="10" rx="2" />
          <path d="M4.500 2.500H8.500V6.500H4.500ZM2.500 4.500V8.500H6.500" />
          <rect x="14.500" y=".5" width="10" height="10" rx="2" />
          <path d="M17 3L22 8M22 3L17 8" strokeWidth="1.700" />
        </svg>
      </div>
      <div className={`flex h-[24px] pl-[11px] leading-[26px] ${SEGOE} text-[14px] tracking-[-0.1px]`}>
        <span className="w-[64px]">Fichiers</span>
        <span className="w-[73px]">Interface</span>
        <span className="w-[91px]">Préférences</span>
        <span className="tracking-[0.3px]">Aide</span>
      </div>
      <div className="flex h-[45px] items-center border-t border-b border-t-[#d6d6d6] border-b-[#acacac] bg-linear-to-b from-[#fafafa] to-[#ededed] pl-[6px]">
        <Grip />
        <span className="ml-[8px] w-[39px]"><PlusBlue /></span>
        <span className="w-[39px]"><Wand /></span>
        <span className="w-[39px]"><Forbid /></span>
        <span className="w-[39px]"><RedX /></span>
        <span className="w-[44px]"><BigFloppy /></span>
        <Grip />
        <span className="ml-[10px] w-[39px]"><PointsNew /></span>
        <span className="w-[39px]"><LineNew /></span>
        <span className="w-[37px]"><PolyNew /></span>
        <span className="w-[39px]"><LineAdd /></span>
        <span className="w-[44px]"><LineAddDisabled /></span>
        <Grip />
        <span className="ml-[7px] w-[40px]"><EditTools /></span>
        <span className="w-[39px]"><Forbid /></span>
        <span className="w-[44px]"><BigFloppy /></span>
        <Grip />
        <span className="ml-[8px]"><Printer /></span>
      </div>
      <div className="flex h-[564px] pl-[14px]">
        <LeftColumn />
        <div className="flex w-[8px] justify-center pt-[277px]">
          <svg width="2" height="17" fill="#b8b8b8">{[0, 3, 6, 9, 12, 15].map((y) => <rect key={y} y={y} width="1" height="1" />)}</svg>
        </div>
        <FormArea />
      </div>
      <div className={`flex h-[31px] items-end justify-between pl-[2px] ${TAHOMA} text-[12.500px]`}>
        <div className="flex h-full items-center pt-[7px]">
          <span className="w-[109px] tracking-[0.05px]">GPS non connecté</span>
          <span className="w-[171px] tracking-[0.16px]">Hauteur de la perche GPS : /</span>
          <span className="tracking-[0.1px]">Précision : désactivé</span>
        </div>
        <Resize />
      </div>
      <div className={`flex h-[29px] items-start ${TAHOMA} text-[12.500px]`}>
        <div className="flex h-[29px] w-[64px] items-center justify-center rounded-b-[3px] border border-t-0 border-[#a9a9a9] bg-linear-to-b from-[#f1f1f1] to-[#fcfcfc] pt-[3px]">Lamia</div>
        <div className="flex flex-1 border-t border-[#b4b4b4]">
          {DOCK_TABS.map(([label, w]) => (
            <div key={label} className={`flex h-[26px] items-center justify-center rounded-b-[3px] border border-t-0 border-l-0 border-[#bcbcbc] bg-[#dedede] pt-[2px] whitespace-nowrap ${w}`}>{label}</div>
          ))}
        </div>
      </div>
    </div>
  );
}

function StatusBar() {
  return (
    <div className={`flex h-[32px] items-center pt-[2px] pl-[4px] pr-px ${TAHOMA} text-[12.500px] whitespace-nowrap`}>
      <div className="flex h-[24px] w-[284px] shrink-0 items-center rounded-[3px] border border-[#adadad] bg-white pt-px pl-[7px] tracking-[0.16px] text-[#7f7f7f]">
        <svg width="13" height="13" fill="none" stroke="#888" strokeWidth="1.300" className="mr-[8px]"><circle cx="5" cy="5" r="3.800" /><path d="M8 8L12 12" /></svg>
        Taper pour trouver (Ctrl+K)
      </div>
      <span className="ml-[8px] w-[221px] shrink-0 pt-[2px]">Prêt</span>
      <span className="w-[72px] shrink-0 pt-[2px] tracking-[0.1px]">Coordonnée</span>
      <div className="flex h-[24px] w-[118px] shrink-0 items-center rounded-[3px] border border-[#adadad] bg-white pt-px pl-[6px]">1420391,4186100</div>
      <span className="ml-[4px] w-[33px] shrink-0"><Binoculars /></span>
      <span className="w-[43px] shrink-0 pt-px">Échelle</span>
      <div className="flex h-[24px] w-[93px] shrink-0 items-center justify-between rounded-[3px] border border-[#adadad] bg-white pl-[3px]">
        <span className="pt-px">1:10600</span>
        <span className="flex h-full w-[28px] items-center justify-center bg-linear-to-b from-[#fefefe] to-[#eee]"><Tri w={9} h={5} /></span>
      </div>
      <span className="ml-[12px] w-[25px] shrink-0"><Lock /></span>
      <span className="w-[37px] shrink-0 pt-[2px]">Loupe</span>
      <Spin text="100%" className="h-[24px] w-[93px] shrink-0 bg-white" boxClass="leading-[24px]" />
      <span className="ml-[9px] w-[56px] shrink-0 pt-[2px]">Rotation</span>
      <Spin text="0,0 °" className="h-[24px] w-[89px] shrink-0 bg-white" boxClass="leading-[23px]" />
      <div className="ml-[6px] flex h-[17px] w-[17px] shrink-0 items-center justify-center border border-[#c0c0c0] bg-white">
        <svg width="12" height="12" fill="none" stroke="#111" strokeWidth="2.200"><path d="M1.500 6L4.500 10.500L10.500 .8" /></svg>
      </div>
      <span className="ml-[6px] w-[53px] shrink-0 pt-px">Rendu</span>
      <span className="w-[24px] shrink-0"><Globe /></span>
      <span className="w-[84px] shrink-0 pt-[2px] tracking-[0.1px]">EPSG:3945</span>
      <Speech />
      <div className="ml-auto self-end"><Resize /></div>
    </div>
  );
}

export default function App() {
  return (
    <div className="relative flex h-[848px] w-[1444px] flex-col overflow-hidden border border-[#26262b] bg-[#efefef] text-black">
      <div className={`flex h-[37px] shrink-0 items-center bg-white pl-[9px] ${SEGOE}`}>
        <QgisLogo />
        <span className="ml-[5px] text-[14px]">*Projet sans titre - QGIS</span>
        <svg width="131" height="14" className="mr-[22px] ml-auto" fill="none" stroke="#111">
          <path d="M0 7.500H12M58.500 1.500H69.500V12.500H58.500Z" />
          <path d="M117.500 1.500L129 13M129 1.500L117.500 13" strokeWidth="1.200" />
        </svg>
      </div>
      <svg className="absolute left-[592px] top-[20px]" width="14" height="20" fill="#fff" stroke="#111">
        <path d="M.5 .8V16.500L4 13.300L6.500 18.500L9 17.500L6.700 12.500H11.500Z" />
      </svg>

      <div className={`flex h-[24px] shrink-0 pl-[11px] leading-[26px] ${SEGOE} text-[14px] tracking-[-0.06px]`}>
        {MENUS.map(([a, u, b, w]) => (
          <span key={a + u + b} className={`${w} shrink-0 whitespace-nowrap`}>{a}<span className="underline underline-offset-2">{u}</span>{b}</span>
        ))}
      </div>

      <div className={`flex h-[40px] shrink-0 items-center border-t border-b border-t-[#d6d6d6] border-b-[#b4b4b4] bg-linear-to-b from-[#fafafa] to-[#ebebeb] pl-[6px] ${TAHOMA} text-[12.500px]`}>
        <Grip />
        <span className="ml-[11px] w-[30px]"><NewFile /></span>
        <span className="w-[34px]"><OpenFolder /></span>
        <span className="w-[32px]"><Floppy /></span>
        <span className="w-[33px]"><LayoutNew /></span>
        <span className="w-[34px]"><LayoutManager /></span>
        <span className="w-[37px]"><StyleManager /></span>
        <Grip />
        <span className="ml-[10px] w-[34px]"><Magnet /></span>
        <span className="w-[34px]"><SnapV /></span>
        <span className="w-[25px]"><SnapDots /></span>
        <Spin text="12" className="h-[23px] w-[91px] text-[#7d7d7d]" boxClass="leading-[22px]" arrow="#9b9b9b" />
        <div className="ml-[1px] flex h-[24px] w-[94px] items-center justify-between rounded-[3px] border border-[#c4c4c4] pt-px pr-[10px] pl-[8px] text-[#7d7d7d]">px<Tri color="#9b9b9b" w={10} /></div>
        <span className="ml-[7px] w-[31px]"><TopoEdit /></span>
        <span className="w-[33px]"><SnapCross /></span>
        <span className="w-[30px]"><SelfSnap /></span>
        <Tri color="#9b9b9b" w={10} />
        <Grip className="ml-[14px]" />
        <span className="ml-[9px]"><Octopus /></span>
      </div>

      <div className="flex h-[712px] shrink-0">
        <div className="h-[713px] w-[417px] shrink-0 border border-[#b4b4b4]"><MapCanvas /></div>
        <div className="flex w-[7px] justify-center pt-[350px]">
          <svg width="1" height="17" fill="#b8b8b8">{[0, 3, 6, 9, 12, 15].map((y) => <rect key={y} y={y} width="1" height="1" />)}</svg>
        </div>
        <LamiaDock />
      </div>
      <StatusBar />
    </div>
  );
}
